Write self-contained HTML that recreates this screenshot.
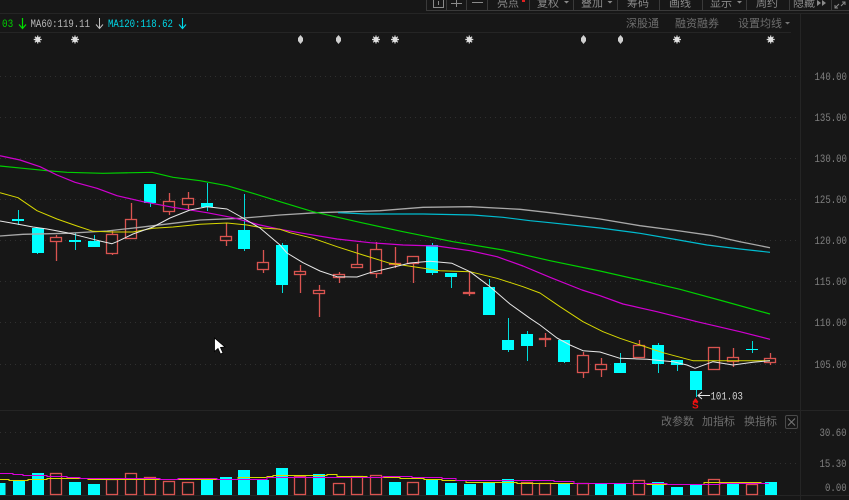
<!DOCTYPE html>
<html><head><meta charset="utf-8"><style>
html,body{margin:0;padding:0;background:#171717;width:849px;height:500px;overflow:hidden}
svg{display:block;filter:blur(.3px)}
text{font-family:"Liberation Sans","Noto Sans CJK SC",sans-serif}
.m{font-family:"Liberation Mono",monospace;font-size:11px}
.a{fill:#808080}
.c{font-size:11px;fill:#6e6e6e}
.t{font-size:11px;fill:#8a8a8a}
</style></head><body>
<svg width="849" height="500" viewBox="0 0 849 500" xmlns="http://www.w3.org/2000/svg">
<rect width="849" height="500" fill="#171717"/>
<g shape-rendering="crispEdges">
<path d="M0 13.5H849M0 32.5H791M0 410.5H849M0 495.5H849M800.5 13V500" stroke="#252525" fill="none"/>
<path d="M0 76.5H800M0 117.5H800M0 158.5H800M0 199.5H800M0 240.5H800M0 281.5H800M0 322.5H800M0 364.5H800M0 432.5H800M0 463.5H800" stroke="#303030" stroke-dasharray="1 4" fill="none"/>
<path d="M426.5 0V10.5H849M446.5 0V10M466.5 0V10M487.5 0V10M529.5 0V10M573.5 0V10M617.5 0V10M659.5 0V10M702.5 0V10M746.5 0V10M789.5 0V10M831.5 0V10" stroke="#3a3a3a" fill="none"/>
<path d="M433.5 0V7.5H443.5V0M438.5 1V5M451 3.5H462M456.5 0V7M472 2.5H483" stroke="#8a8a8a" fill="none"/>
<rect x="522" y="0" width="3" height="2" fill="#e02020"/>
</g>
<text x="497" y="6.5" class="t">亮点</text>
<text x="537" y="6.5" class="t">复权</text>
<text x="581" y="6.5" class="t">叠加</text>
<text x="627" y="6.5" class="t">筹码</text>
<text x="669" y="6.5" class="t">画线</text>
<text x="710" y="6.5" class="t">显示</text>
<text x="756" y="6.5" class="t">周约</text>
<text x="793" y="6.5" class="t">隐藏</text>
<path d="M564 1H569L566.5 3.5ZM607.5 1H612.5L610 3.5ZM737 1H742L739.5 3.5ZM817 0V6L821 3ZM822 0V6L826 3Z" fill="#8a8a8a"/>
<path d="M835 8L839 4M835 5V8H838M845 2L841 6M845 5V2H842" stroke="#8a8a8a" fill="none"/>

<text transform="translate(2 27) scale(.85 1)" class="m" fill="#00d000">03</text>
<path d="M22.5 18V28M19 24.5L22.5 28.5L26 24.5" stroke="#00e000" stroke-width="1.2" fill="none"/>
<text transform="translate(30.5 27) scale(.82 1)" class="m" fill="#b8b8b8">MA60:119.11</text>
<path d="M99.5 18V28M96 24.5L99.5 28.5L103 24.5" stroke="#c0c0c0" fill="none"/>
<text transform="translate(108 27) scale(.82 1)" class="m" fill="#00d8e8">MA120:118.62</text>
<path d="M182.5 18V28M179 24.5L182.5 28.5L186 24.5" stroke="#00d8e8" stroke-width="1.1" fill="none"/>
<text x="626" y="27" class="c">深股通</text>
<text x="675" y="27" class="c">融资融券</text>
<text x="738" y="27" class="c">设置均线</text>
<path d="M785 22H790L787.5 24.5Z" fill="#777"/>

<!-- stars -->
<g stroke="#d8d8d8" stroke-width="1.2" fill="none">
<path d="M37.7 35.5V43.5M33.7 39.5H41.7M34.9 36.7L40.5 42.3M40.5 36.7L34.9 42.3"/>
<path d="M75 35.5V43.5M71 39.5H79M72.2 36.7L77.8 42.3M77.8 36.7L72.2 42.3"/>
<path d="M376 35.5V43.5M372 39.5H380M373.2 36.7L378.8 42.3M378.8 36.7L373.2 42.3"/>
<path d="M395 35.5V43.5M391 39.5H399M392.2 36.7L397.8 42.3M397.8 36.7L392.2 42.3"/>
<path d="M469.3 35.5V43.5M465.3 39.5H473.3M466.5 36.7L472.1 42.3M472.1 36.7L466.5 42.3"/>
<path d="M677 35.5V43.5M673 39.5H681M674.2 36.7L679.8 42.3M679.8 36.7L674.2 42.3"/>
<path d="M770.7 35.5V43.5M766.7 39.5H774.7M767.9 36.7L773.5 42.3M773.5 36.7L767.9 42.3"/>
</g>
<g fill="#e0e0e0">
<circle cx="37.7" cy="39.5" r="2.6"/><circle cx="75" cy="39.5" r="2.6"/><circle cx="376" cy="39.5" r="2.6"/><circle cx="395" cy="39.5" r="2.6"/><circle cx="469.3" cy="39.5" r="2.6"/><circle cx="677" cy="39.5" r="2.6"/><circle cx="770.7" cy="39.5" r="2.6"/>
</g>
<g fill="#d0d0d0">
<path d="M300.5 35L303 38V41L300.5 44L298 41V38Z"/>
<path d="M338.5 35L341 38V41L338.5 44L336 41V38Z"/>
<path d="M583.5 35L586 38V41L583.5 44L581 41V38Z"/>
<path d="M620.5 35L623 38V41L620.5 44L618 41V38Z"/>
</g>

<!-- candles -->
<g shape-rendering="crispEdges">
<path fill="none" stroke="#00dcdc" d="M18.5 210V225M37.5 228V254M75.5 233V250M94.5 235V247M150.5 184V207M207.5 183V211M244.5 194V251M282.5 243V293M432.5 243V275M451.5 273V288M489.5 279V315M508.5 318V352M527.5 331V361M564.5 340V363M620.5 353V373M658.5 343V373M677.5 360V371M696.5 371V397M752.5 341V353"/>
<g fill="#00ffff">
<rect x="12" y="219" width="12" height="2"/><rect x="32" y="228" width="12" height="25"/><rect x="69" y="240" width="12" height="2"/><rect x="88" y="241" width="12" height="6"/><rect x="144" y="184" width="12" height="19"/><rect x="201" y="203" width="12" height="4"/><rect x="238" y="230" width="12" height="19"/><rect x="276" y="245" width="12" height="40"/><rect x="426" y="245" width="12" height="28"/><rect x="445" y="273" width="12" height="4"/><rect x="483" y="287" width="12" height="28"/><rect x="502" y="340" width="12" height="10"/><rect x="521" y="334" width="12" height="12"/><rect x="558" y="340" width="12" height="22"/><rect x="614" y="363" width="12" height="10"/><rect x="652" y="345" width="12" height="19"/><rect x="671" y="360" width="12" height="5"/><rect x="690" y="371" width="12" height="19"/><rect x="746" y="349" width="12" height="1"/>
</g>
</g>
<path fill="none" stroke="#d95450" stroke-width="1.3" d="M56.5 235V261M112.5 231V255M131.5 203V239M169.5 193V215M188.5 192V209M226.5 223V246M263.5 250V273M300.5 265V293M319.5 285V317M339.5 272V283M357.5 244V268M376.5 242V278M395.5 247V268M413.5 256V283M469.5 271V296M545.5 333V347M583.5 352V378M601.5 358V377M639.5 340V357M733.5 348V367M770.5 353V365"/>
<g fill="#171717" stroke="#d95450" stroke-width="1.3">
<rect x="50.5" y="237.5" width="11" height="4"/><rect x="106.5" y="234.5" width="11" height="19"/><rect x="125.5" y="219.5" width="11" height="19"/><rect x="163.5" y="201.5" width="11" height="10"/><rect x="182.5" y="198.5" width="11" height="6"/><rect x="220.5" y="236.5" width="11" height="4"/><rect x="257.5" y="262.5" width="11" height="7"/><rect x="294.5" y="271.5" width="11" height="3"/><rect x="313.5" y="290.5" width="11" height="3"/><rect x="333.5" y="274.5" width="11" height="3"/><rect x="351.5" y="264.5" width="11" height="3"/><rect x="370.5" y="249.5" width="11" height="24"/><rect x="389.5" y="263.5" width="11" height="1"/><rect x="407.5" y="256.5" width="11" height="7"/><rect x="463.5" y="292.5" width="11" height="1"/><rect x="539.5" y="338.5" width="11" height="1"/><rect x="577.5" y="355.5" width="11" height="17"/><rect x="595.5" y="364.5" width="11" height="5"/><rect x="633.5" y="345.5" width="11" height="12"/><rect x="708.5" y="347.5" width="11" height="22"/><rect x="727.5" y="357.5" width="11" height="4"/><rect x="764.5" y="358.5" width="11" height="4"/>
</g>

<!-- MAs -->
<g fill="none" stroke-width="1" stroke-linejoin="round">
<polyline stroke="#a8a8a8" stroke-width="1.3" points="0,236 23,234.3 67,233.3 107,231 140,227.3 173,223.3 200,220 240,218.3 280,215 317,212.7 380,210.7 423,207.3 470,206.7 520,209.3 550,212.7 600,219 640,225.7 673,230 713,235.7 740,241.7 770,247.7"/>
<polyline stroke="#00bcd0" stroke-width="1.2" points="338,212.7 367,214 423,214 473,215 503,217.3 530,220.7 550,222.7 600,228 640,233.3 673,239 707,245 740,249 770,252.3"/>
<polyline stroke="#00d000" stroke-width="1.2" points="0,166 23,168.3 47,170.7 67,172.3 103,173.3 152,172.3 173,177.3 200,180.7 227,185.7 253,193.3 280,201.7 313,211.7 357,221.7 403,231.7 453,241.7 503,250 550,260.7 600,271 640,280 680,289.3 723,301 770,314"/>
<polyline stroke="#d000d0" stroke-width="1.2" points="0,155.7 20,160 40,166.7 57,175 75,182.3 97,188.3 117,195.7 143,201.7 173,207.3 207,212.7 233,217.7 260,225 280,229.3 303,233.3 337,239 370,242.7 403,245 437,246 470,250.7 497,256.7 523,266 550,277.3 582,290 600,295.7 623,304 657,311.7 697,321.7 740,331.7 770,339.3"/>
<polyline stroke="#d8d800" points="0,192.7 18,197.7 37,210.7 57,219 77,226 93,231.3 113,232 133,232 153,228.3 173,227 200,224.3 227,223 247,225 263,228 280,229.3 290,232.7 313,238.3 337,246.7 363,255 390,263.3 417,267.3 440,270.7 470,271.7 497,278.3 523,286.7 540,293 560,306.7 583,321.7 603,331.7 620,338.3 640,345 663,352.7 693,360.7 727,360.7 770,360.7"/>
<polyline stroke="#e8e8e8" points="0,221 17,224 33,227 47,229 67,232.7 87,237.7 100,241 112,243.7 117,241.7 133,234 153,227 170,218 190,210 207,206.7 227,209 243,218 260,228 280,245 287,253 303,262.7 320,271 337,276.7 357,277 370,272.7 390,268 410,263 430,261.3 452,263.3 470,271.7 490,286.7 510,304 530,318.3 540,325 557,338 570,345 583,350.7 600,352 620,358.3 647,359.3 673,361.7 687,365 695,368.3 713,361.7 733,365 753,362.3 770,360.7"/>
</g>

<!-- low marker -->
<path d="M698 395.5H710M702 392L698 395.5L702 399" fill="none" stroke="#e8e8e8"/>
<text transform="translate(710.5 399.5) scale(.82 1)" class="m" fill="#d8d8d8">101.03</text>
<path d="M695.5 398L698.5 402H692.5Z" fill="#f01010"/>
<text x="692" y="408.5" font-size="10" font-weight="bold" fill="#f01010">S</text>

<!-- cursor -->
<path d="M214.5 338V351.5L218 348.5L220.5 354L223 353L220.5 347.5L225 347Z" fill="#fff" stroke="#000" stroke-width=".8"/>

<!-- axis -->
<text transform="translate(814.5 80) scale(.82 1)" class="m a">140.00</text>
<text transform="translate(814.5 121) scale(.82 1)" class="m a">135.00</text>
<text transform="translate(814.5 162) scale(.82 1)" class="m a">130.00</text>
<text transform="translate(814.5 203) scale(.82 1)" class="m a">125.00</text>
<text transform="translate(814.5 244) scale(.82 1)" class="m a">120.00</text>
<text transform="translate(814.5 285) scale(.82 1)" class="m a">115.00</text>
<text transform="translate(814.5 326) scale(.82 1)" class="m a">110.00</text>
<text transform="translate(814.5 368) scale(.82 1)" class="m a">105.00</text>
<text transform="translate(819.5 436) scale(.82 1)" class="m a">30.60</text>
<text transform="translate(819.5 467) scale(.82 1)" class="m a">15.30</text>
<text transform="translate(825 491) scale(.82 1)" class="m a">0.00</text>
<text x="661" y="425" class="c">改参数</text>
<text x="702" y="425" class="c">加指标</text>
<text x="744" y="425" class="c">换指标</text>
<rect x="785.5" y="415.5" width="12" height="13" rx="1.5" fill="none" stroke="#4a4a4a"/>
<path d="M788 418.5L795 425.5M795 418.5L788 425.5" stroke="#777" fill="none"/>

<!-- volume -->
<g shape-rendering="crispEdges">
<g fill="#00ffff">
<rect x="0" y="483" width="5.5" height="12"/><rect x="13" y="481" width="12" height="14"/><rect x="32" y="473" width="12" height="22"/><rect x="69" y="482" width="12" height="13"/><rect x="88" y="484" width="12" height="11"/><rect x="201" y="479" width="12" height="16"/><rect x="220" y="477" width="12" height="18"/><rect x="238" y="470" width="12" height="25"/><rect x="257" y="480" width="12" height="15"/><rect x="276" y="468" width="12" height="27"/><rect x="313" y="474" width="12" height="21"/><rect x="389" y="482" width="12" height="13"/><rect x="426" y="480" width="12" height="15"/><rect x="445" y="483" width="12" height="12"/><rect x="464" y="484" width="12" height="11"/><rect x="483" y="482" width="12" height="13"/><rect x="502" y="479" width="12" height="16"/><rect x="558" y="484" width="12" height="11"/><rect x="595" y="484" width="12" height="11"/><rect x="614" y="484" width="12" height="11"/><rect x="652" y="482" width="12" height="13"/><rect x="671" y="487" width="12" height="8"/><rect x="690" y="484" width="12" height="11"/><rect x="727" y="484" width="12" height="11"/><rect x="765" y="482" width="12" height="13"/>
</g>
</g>
<g fill="none" stroke="#d95450" stroke-width="1.3">
<rect x="50.5" y="473.5" width="11" height="21"/><rect x="106.5" y="479.5" width="11" height="15"/><rect x="125.5" y="473.5" width="11" height="21"/><rect x="144.5" y="477.5" width="11" height="17"/><rect x="163.5" y="481.5" width="11" height="13"/><rect x="182.5" y="482.5" width="11" height="12"/><rect x="294.5" y="476.5" width="11" height="18"/><rect x="333.5" y="483.5" width="11" height="11"/><rect x="351.5" y="476.5" width="11" height="18"/><rect x="370.5" y="475.5" width="11" height="19"/><rect x="407.5" y="482.5" width="11" height="12"/><rect x="521.5" y="482.5" width="11" height="12"/><rect x="539.5" y="483.5" width="11" height="11"/><rect x="577.5" y="483.5" width="11" height="11"/><rect x="633.5" y="480.5" width="11" height="14"/><rect x="708.5" y="479.5" width="11" height="15"/><rect x="746.5" y="484.5" width="11" height="10"/>
</g>
<g shape-rendering="crispEdges">
<polyline fill="none" stroke="#d8d800" points="0,479.5 9,479.5 9,480.5 28,480.5 28,479.5 47,479.5 47,478.5 88,478.5 88,479.5 160,479.5 213,479.5 238,479.5 238,477.5 267,477.5 267,476.5 273,476.5 273,475.5 327,475.5 327,474.5 337,474.5 337,476.5 367,476.5 367,477.5 400,477.5 400,478.5 424,478.5 424,479.5 442,479.5 442,480.5 466,480.5 466,482.5 517,482.5 517,483.5 564,483.5 647,483.5 647,484.5 704,484.5 704,482.5 761,482.5 761,483.5 769,483.5"/>
<polyline fill="none" stroke="#d800d8" points="0,473.5 13,473.5 13,474.5 23,474.5 23,475.5 47,475.5 47,476.5 67,476.5 67,477.5 80,477.5 80,478.5 140,478.5 160,478.5 160,479.5 178,479.5 178,478.5 217,478.5 217,479.5 267,479.5 267,477.5 333,477.5 383,477.5 383,476.5 412,476.5 412,477.5 442,477.5 442,478.5 456,478.5 456,480.5 497,480.5 554,480.5 554,481.5 574,481.5 574,483.5 667,483.5 667,484.5 720,484.5 720,483.5 769,483.5"/>
</g>
</svg>
</body></html>
